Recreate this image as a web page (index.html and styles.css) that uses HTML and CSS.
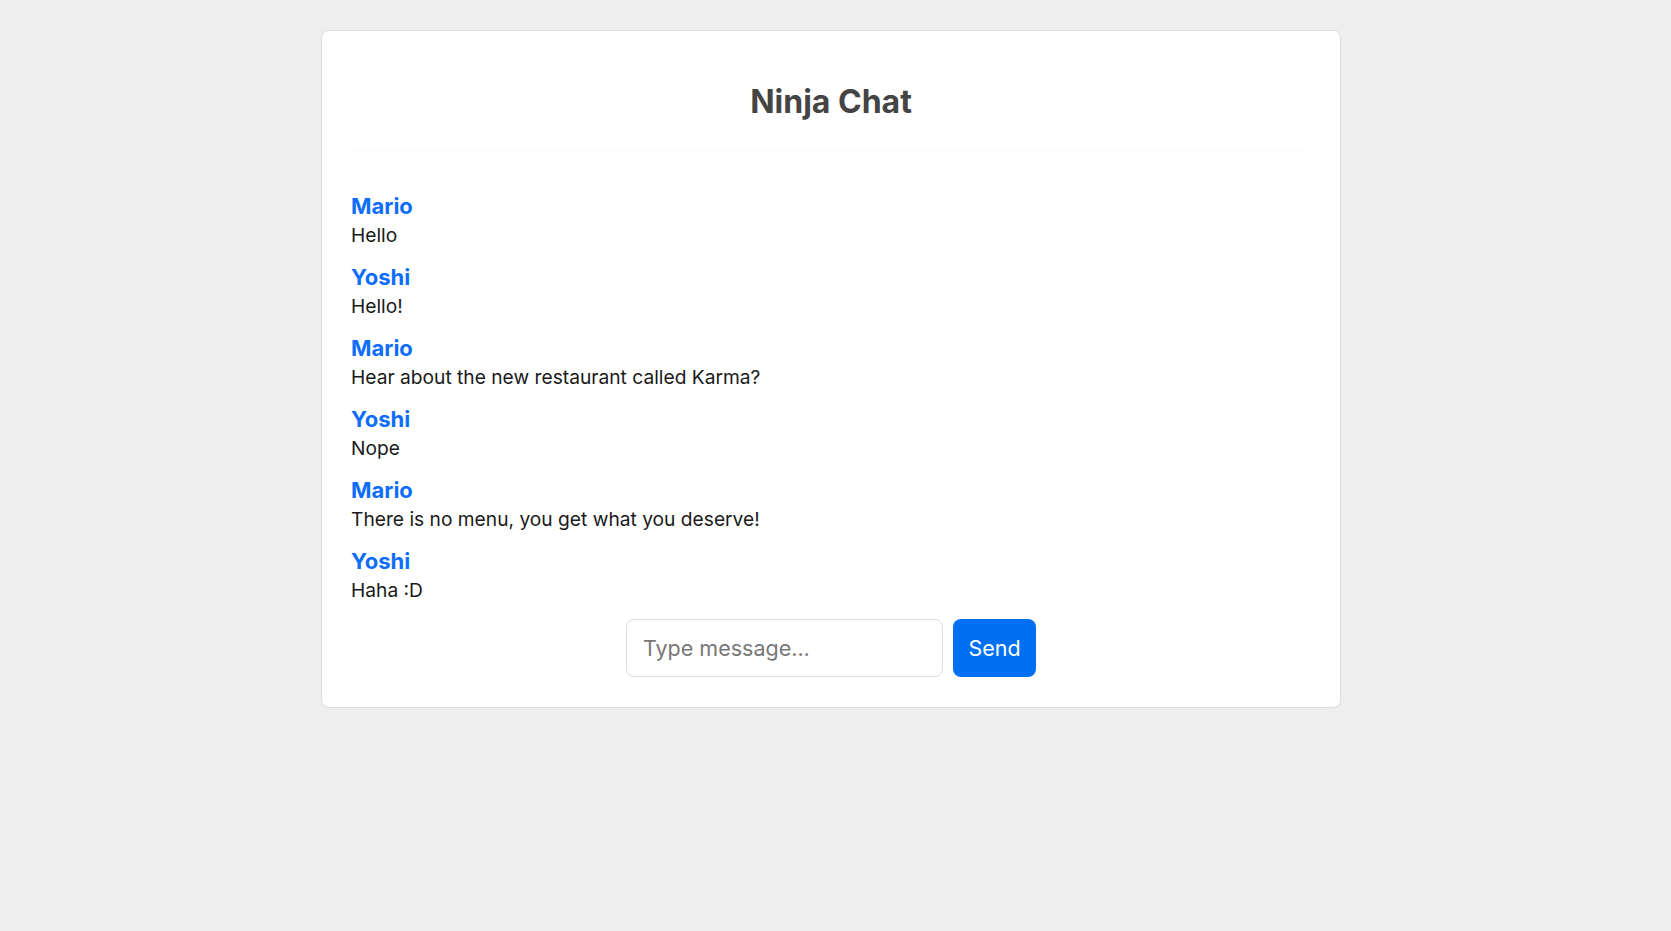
FILE: index.html
```html
<!DOCTYPE html>
<html lang="en">
<head>
<meta charset="utf-8">
<title>Ninja Chat</title>
<link rel="stylesheet" href="styles.css">
</head>
<body>
<div class="card">
  <header class="header">
    <h1 class="title">Ninja Chat</h1>
  </header>
  <div class="messages">
    <div class="msg"><div class="name">Mario</div><div class="text">Hello</div></div>
    <div class="msg"><div class="name">Yoshi</div><div class="text">Hello!</div></div>
    <div class="msg"><div class="name">Mario</div><div class="text">Hear about the new restaurant called Karma?</div></div>
    <div class="msg"><div class="name">Yoshi</div><div class="text">Nope</div></div>
    <div class="msg"><div class="name">Mario</div><div class="text">There is no menu, you get what you deserve!</div></div>
    <div class="msg"><div class="name">Yoshi</div><div class="text">Haha :D</div></div>
  </div>
  <form class="footer">
    <input class="input" type="text" placeholder="Type message...">
    <button class="send" type="button">Send</button>
  </form>
</div>
</body>
</html>
```
FILE: styles.css
```css
html, body {
  margin: 0;
  background: #eeeeee;
}
body {
  padding: 30px 9px 0 0;
  font-family: Inter, "Noto Sans", sans-serif;
  color: #222;
}
.card {
  width: 1018px;
  margin: 0 auto;
  background: #fff;
  border: 1px solid #dddddd;
  border-radius: 8px;
}
.header {
  margin: 0 30px;
  padding: 51px 0 30px;
  border-bottom: 1px solid #fbfbfb;
}
.title {
  margin: 0;
  text-align: center;
  font-size: 32px;
  font-weight: 700;
  color: #444;
  line-height: 39px;
}
.messages {
  padding: 41px 29px 0;
}
.msg {
  margin-bottom: 17px;
}
.name {
  font-size: 22px;
  font-weight: 700;
  color: #0d6efd;
  line-height: 27px;
}
.text {
  margin-top: 4px;
  font-size: 19.2px;
  line-height: 23px;
  color: #1a1a1a;
}
.footer {
  display: flex;
  justify-content: center;
  gap: 10px;
  margin: 0;
  padding: 0 30px 30px;
}
.input {
  box-sizing: border-box;
  width: 317px;
  height: 58px;
  padding: 0 16px;
  border: 1px solid #dddddd;
  border-radius: 8px;
  font-family: Inter, "Noto Sans", sans-serif;
  font-size: 21.5px;
  color: #222;
  outline: none;
}
.input::placeholder {
  color: #777;
}
.send {
  box-sizing: border-box;
  width: 83px;
  height: 58px;
  padding: 0;
  border: none;
  border-radius: 8px;
  background: #0070f3;
  color: #fff;
  font-family: Inter, "Noto Sans", sans-serif;
  font-size: 21.5px;
}
```
